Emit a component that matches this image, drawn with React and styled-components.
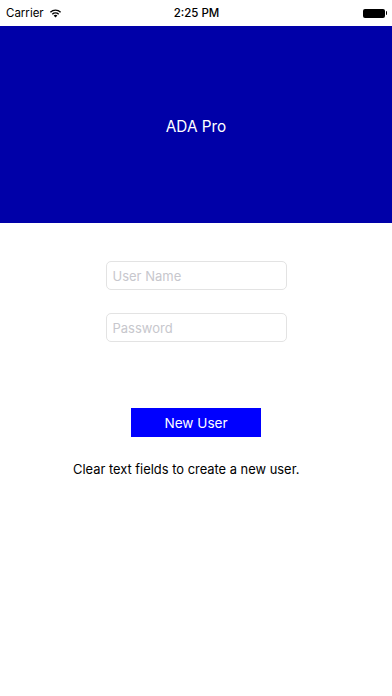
import React from "react";
import styled, { createGlobalStyle } from "styled-components";

const Global = createGlobalStyle`
  html, body {
    margin: 0;
    padding: 0;
    background: #fff;
  }
  body {
    font-family: "Inter", "Liberation Sans", sans-serif;
  }
  * {
    box-sizing: border-box;
  }
`;

const Screen = styled.div`
  width: 392px;
  height: 696px;
  display: flex;
  flex-direction: column;
  background: #fff;
  overflow: hidden;
`;

const StatusBar = styled.div`
  height: 26px;
  display: grid;
  grid-template-columns: 1fr auto 1fr;
  align-items: center;
  padding: 0 5px 0 6px;
  font-size: 11.5px;
  color: #000;
`;

const Carrier = styled.div`
  display: flex;
  align-items: center;
  gap: 5px;
`;

const Time = styled.div`
  font-weight: 500;
  font-size: 11.5px;
`;

const Battery = styled.div`
  justify-self: end;
  display: flex;
  align-items: center;
  gap: 1px;
`;

const BatteryBody = styled.div`
  width: 22px;
  height: 9px;
  background: #000;
  border-radius: 2px;
`;

const BatteryNub = styled.div`
  width: 1.5px;
  height: 4px;
  background: #000;
  border-radius: 0 1px 1px 0;
`;

const Header = styled.div`
  height: 197px;
  background: #0000a8;
  display: flex;
  align-items: center;
  justify-content: center;
  color: #fff;
  font-size: 15.3px;
  padding-top: 3px;
`;

const Form = styled.div`
  display: flex;
  flex-direction: column;
  align-items: center;
  padding-top: 38px;
  gap: 23px;
`;

const Field = styled.input`
  width: 181px;
  height: 29px;
  border: 1px solid #e3e3e3;
  border-radius: 5px;
  padding: 0 6px;
  font-family: inherit;
  font-size: 13px;
  color: #000;
  outline: none;
  &::placeholder {
    color: #c7c7cd;
  }
`;

const Actions = styled.div`
  display: flex;
  flex-direction: column;
  align-items: center;
  padding-top: 66px;
  gap: 25px;
`;

const Button = styled.button`
  width: 130px;
  height: 29px;
  background: #0000ff;
  color: #fff;
  border: none;
  border-radius: 0;
  font-family: inherit;
  font-size: 13.6px;
  padding: 0;
`;

const Hint = styled.div`
  width: 246px;
  font-size: 12.9px;
  color: #000;
  text-align: left;
`;

const Wifi = () => (
  <svg width="13" height="10" viewBox="0 0 13 10">
    <path d="M6.5 9.6 L4.6 7.6 A2.8 2.8 0 0 1 8.4 7.6 Z" fill="#000" />
    <path d="M3.3 6.2 A4.7 4.7 0 0 1 9.7 6.2" stroke="#000" strokeWidth="1.4" fill="none" />
    <path d="M1.4 4.2 A7.4 7.4 0 0 1 11.6 4.2" stroke="#000" strokeWidth="1.4" fill="none" />
  </svg>
);

export default function App() {
  return (
    <Screen>
      <Global />
      <StatusBar>
        <Carrier>
          Carrier <Wifi />
        </Carrier>
        <Time>2:25 PM</Time>
        <Battery>
          <BatteryBody />
          <BatteryNub />
        </Battery>
      </StatusBar>
      <Header>ADA Pro</Header>
      <Form>
        <Field placeholder="User Name" />
        <Field type="password" placeholder="Password" />
      </Form>
      <Actions>
        <Button>New User</Button>
        <Hint>Clear text fields to create a new user.</Hint>
      </Actions>
    </Screen>
  );
}
